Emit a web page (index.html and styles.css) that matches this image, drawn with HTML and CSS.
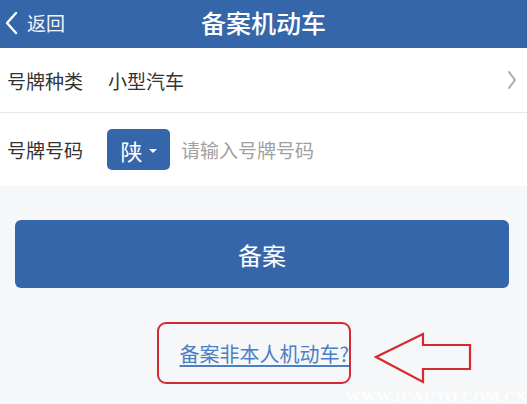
FILE: index.html
```html
<!DOCTYPE html>
<html lang="zh-CN">
<head>
    <meta charset="UTF-8">
    <meta name="viewport" content="width=device-width, initial-scale=1.0">
    <title>备案机动车</title>
    <link rel="stylesheet" href="styles.css">
</head>
<body>
<div class="header">
    <div class="back">
        <svg class="back-icon" width="13" height="24" viewBox="0 0 13 24">
            <path d="M11 2 L2 12 L11 22" fill="none" stroke="#fff" stroke-width="2.4" stroke-linecap="round" stroke-linejoin="round"/>
        </svg>
        <span>返回</span>
    </div>
    <h1>备案机动车</h1>
</div>
<div class="form">
    <div class="row row-type">
        <span class="label">号牌种类</span>
        <span class="value">小型汽车</span>
        <svg class="arrow-right" width="10" height="20" viewBox="0 0 10 20">
            <path d="M2 2 L8 10 L2 18" fill="none" stroke="#aaa" stroke-width="2" stroke-linecap="round" stroke-linejoin="round"/>
        </svg>
    </div>
    <div class="row row-number">
        <span class="label">号牌号码</span>
        <div class="province">陕<span class="caret"></span></div>
        <span class="placeholder">请输入号牌号码</span>
    </div>
</div>
<div class="actions">
    <button class="submit">备案</button>
    <div class="note">
        <div class="note-box"><a href="#">备案非本人机动车?</a></div>
        <svg class="pointer" width="100" height="54" viewBox="0 0 100 54">
            <path d="M2 25 L49 2 L49 13 L96 13 L96 37 L49 37 L49 50 Z" fill="none" stroke="#d42a30" stroke-width="2.2" stroke-linejoin="miter"/>
        </svg>
    </div>
</div>
<div class="watermark">WWW.ICAUTO.COM.CN</div>
</body>
</html>
```

FILE: styles.css
```css
body {
    font-family: "Noto Sans CJK SC", "Noto Sans", sans-serif;
    margin: 0;
    padding: 0;
    background-color: #f5f7f9;
    height: 404px;
    overflow: hidden;
    position: relative;
}
.header {
    height: 48px;
    background-color: #3466a9;
    color: #fff;
    display: flex;
    align-items: center;
    justify-content: center;
    position: relative;
}
.header h1 {
    margin: 0;
    font-size: 25px;
    font-weight: 500;
    line-height: 1;
    margin-top: -4px;
}
.back {
    position: absolute;
    left: 5px;
    top: 9px;
    display: flex;
    align-items: center;
    gap: 9px;
    font-size: 19px;
    color: #f2f5fa;
}
.form {
    background: #fff;
}
.row {
    display: flex;
    align-items: center;
    padding-left: 7px;
    color: #333;
    font-size: 19px;
}
.row-type {
    height: 64px;
    border-bottom: 1px solid #e8e8e8;
}
.row-type .value {
    margin-left: 25px;
}
.arrow-right {
    margin-left: auto;
    margin-right: 10px;
}
.row-number {
    height: 73px;
}
.province {
    margin-left: 24px;
    width: 63px;
    height: 41px;
    background: #3466a9;
    border-radius: 5px;
    color: #fff;
    font-size: 22px;
    display: flex;
    align-items: center;
    justify-content: center;
    gap: 6px;
}
.caret {
    width: 0;
    height: 0;
    border-left: 4px solid transparent;
    border-right: 4px solid transparent;
    border-top: 4px solid #fff;
    margin-top: 3px;
}
.placeholder {
    margin-left: 11px;
    color: #a0a0a0;
}
.actions {
    padding-top: 34px;
}
.submit {
    display: block;
    margin-left: 15px;
    width: 494px;
    height: 68px;
    border: none;
    border-radius: 6px;
    background-color: #3466a9;
    color: #fff;
    font-family: inherit;
    font-size: 24px;
}
.note {
    position: relative;
    margin-top: 34px;
    margin-left: 157px;
}
.note-box {
    width: 190px;
    height: 58px;
    border: 2px solid #d42a30;
    border-radius: 9px;
    display: flex;
    align-items: center;
    justify-content: flex-end;
}
.note-box a {
    color: #4b7fc5;
    font-size: 20px;
    text-decoration: underline;
    text-underline-offset: 3px;
}
.pointer {
    position: absolute;
    left: 217px;
    top: 10px;
}
.watermark {
    position: absolute;
    right: 0;
    bottom: -2px;
    font-family: "Liberation Serif", serif;
    font-weight: bold;
    font-size: 15px;
    color: rgba(255, 255, 255, 0.9);
    letter-spacing: 0.5px;
}
```
